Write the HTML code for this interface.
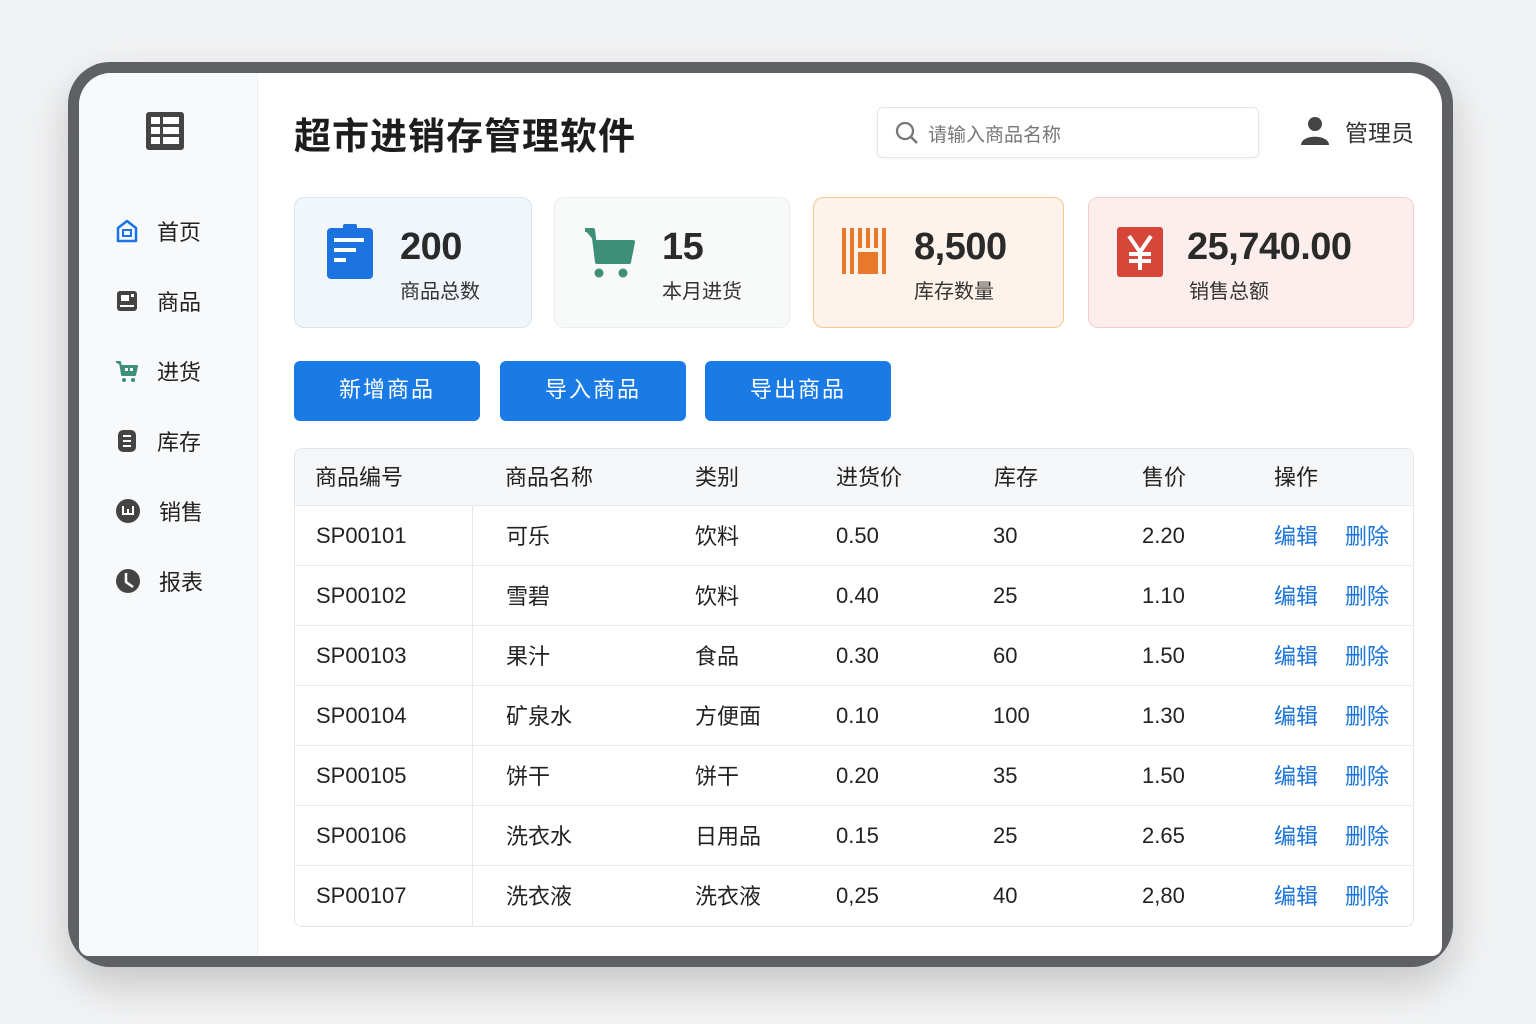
<!DOCTYPE html>
<html><head><meta charset="utf-8"><style>
*{margin:0;padding:0;box-sizing:border-box}
body{width:1536px;height:1024px;background:#f1f2f3;font-family:"Liberation Sans","Noto Sans CJK SC",sans-serif;position:relative;overflow:hidden;color:#222}
.frame{position:absolute;left:68px;top:62px;width:1385px;height:905px;border-radius:42px;background:#5e6063;box-shadow:0 18px 40px rgba(0,0,0,.18)}
.inner{position:absolute;left:79px;top:73px;width:1363px;height:883px;border-radius:32px 32px 10px 10px;background:#fff;overflow:hidden}
.side{position:absolute;left:0;top:0;width:179px;height:100%;background:#f8f9fa;border-right:1px solid #eceef0}
.abs{position:absolute}
.nav{position:absolute;left:36px;font-size:22px;color:#222;display:flex;align-items:center}
.nav svg{margin-right:18px}
.card{position:absolute;top:197px;height:131px;border-radius:10px;border:1px solid}
.num{position:absolute;font-size:38px;font-weight:bold;color:#2a2a2a;letter-spacing:-.5px}
.lab{position:absolute;font-size:20px;color:#333}
.btn{position:absolute;top:361px;height:60px;width:186px;background:#1a7be6;border-radius:6px;color:#fff;font-size:22px;text-align:center;line-height:58px;letter-spacing:2px}
.tbl{position:absolute;left:294px;top:448px;width:1120px;height:479px;border:1px solid #e4e6e8;border-radius:8px;overflow:hidden}
.row{position:absolute;left:0;width:100%;height:60px;border-top:1px solid #e8e9eb;font-size:22px;color:#222}
.row span{position:absolute;top:17px}
.row span.c{top:13px}
.hd{top:0;height:56px;background:#f5f6f7;border-top:none}
.hd span{top:11px}
.blue{color:#1a73d9}
</style></head><body>
<div class="frame"></div>
<div class="inner">
 <div class="side">
  <svg class="abs" style="left:64px;top:36px" width="44" height="44" viewBox="0 0 44 44"><rect x="3" y="3" width="38" height="38" rx="3" fill="#444"/><rect x="8" y="8" width="9" height="7" fill="#fff"/><rect x="20" y="8" width="16" height="7" fill="#fff"/><rect x="8" y="18" width="9" height="7" fill="#fff"/><rect x="20" y="18" width="16" height="7" fill="#fff"/><rect x="8" y="28" width="9" height="7" fill="#fff"/><rect x="20" y="28" width="16" height="7" fill="#fff"/></svg>
  <div class="nav" style="top:142px"><svg width="24" height="26" viewBox="0 0 24 26"><path d="M3 10 L12 3 L21 10 V23 H3 Z" fill="none" stroke="#1a73e8" stroke-width="2.5" stroke-linejoin="round"/><rect x="8" y="12" width="8" height="6" fill="none" stroke="#1a73e8" stroke-width="2"/></svg>首页</div>
  <div class="nav" style="top:212px"><svg width="24" height="24" viewBox="0 0 24 24"><rect x="2" y="2" width="20" height="20" rx="3" fill="#444"/><rect x="6" y="6" width="8" height="6" fill="#fff"/><rect x="16" y="5" width="3" height="3" fill="#fff"/><rect x="5" y="16" width="14" height="2" fill="#fff"/></svg>商品</div>
  <div class="nav" style="top:282px"><svg width="24" height="24" viewBox="0 0 24 24"><path d="M1 3 H5 L7 16 H20 L22 7 H6" fill="#3d8f78" stroke="#3d8f78" stroke-width="2" stroke-linejoin="round"/><rect x="10" y="9" width="3" height="3" fill="#fff"/><rect x="15" y="9" width="3" height="3" fill="#fff"/><circle cx="9" cy="21" r="2" fill="#3d8f78"/><circle cx="18" cy="21" r="2" fill="#3d8f78"/></svg>进货</div>
  <div class="nav" style="top:352px"><svg width="24" height="24" viewBox="0 0 24 24"><rect x="3" y="1" width="18" height="22" rx="5" fill="#444"/><rect x="8" y="6" width="8" height="2" fill="#fff"/><rect x="8" y="11" width="8" height="2" fill="#fff"/><rect x="8" y="16" width="8" height="2" fill="#fff"/></svg>库存</div>
  <div class="nav" style="top:422px"><svg width="26" height="26" viewBox="0 0 26 26"><circle cx="13" cy="13" r="12" fill="#444"/><path d="M8 8 V16 H18 V8 M13 11 V16" fill="none" stroke="#fff" stroke-width="2"/></svg>销售</div>
  <div class="nav" style="top:492px"><svg width="26" height="26" viewBox="0 0 26 26"><circle cx="13" cy="13" r="12" fill="#444"/><path d="M11 5 V14 L18 19" fill="none" stroke="#fff" stroke-width="2.5"/></svg>报表</div>
 </div>
</div>
<div class="abs" style="left:294px;top:106px;font-size:37px;font-weight:bold;color:#1d1d1d;letter-spacing:1px">超市进销存管理软件</div>
<div class="abs" style="left:877px;top:107px;width:382px;height:51px;border:1px solid #e3e5e8;border-radius:6px;box-shadow:0 1px 3px rgba(0,0,0,.05)"></div>
<svg class="abs" style="left:894px;top:120px" width="26" height="26" viewBox="0 0 26 26"><circle cx="11" cy="11" r="8" fill="none" stroke="#777" stroke-width="2.3"/><path d="M17 17 L23 23" stroke="#777" stroke-width="2.5"/></svg>
<div class="abs" style="left:928px;top:120px;font-size:19px;color:#777">请输入商品名称</div>
<svg class="abs" style="left:1298px;top:114px" width="34" height="34" viewBox="0 0 34 34"><circle cx="17" cy="10" r="7" fill="#444"/><path d="M3 31 C3 20 31 20 31 31 Z" fill="#444"/></svg>
<div class="abs" style="left:1345px;top:114px;font-size:23px;color:#333">管理员</div>

<div class="card" style="left:294px;width:238px;background:#f1f6fc;border-color:#d8e4f2"></div>
<svg class="abs" style="left:326px;top:224px" width="48" height="56" viewBox="0 0 48 56"><rect x="1" y="4" width="46" height="51" rx="4" fill="#1b73e0"/><rect x="17" y="0" width="14" height="8" rx="2" fill="#1b73e0"/><rect x="8" y="14" width="30" height="4" fill="#fff"/><rect x="8" y="24" width="22" height="4" fill="#fff"/><rect x="8" y="34" width="12" height="4" fill="#fff"/></svg>
<div class="num" style="left:400px;top:226px">200</div><div class="lab" style="left:400px;top:275px">商品总数</div>

<div class="card" style="left:554px;width:236px;background:#f8f9f9;border-color:#eceeee"></div>
<svg class="abs" style="left:583px;top:226px" width="52" height="52" viewBox="0 0 52 52"><path d="M2 4 H10 L14 36 H46 L50 16 H12" fill="#3d8f78" stroke="#3d8f78" stroke-width="4" stroke-linejoin="round"/><circle cx="16" cy="47" r="4.5" fill="#3d8f78"/><circle cx="40" cy="47" r="4.5" fill="#3d8f78"/></svg>
<div class="num" style="left:662px;top:226px">15</div><div class="lab" style="left:662px;top:275px">本月进货</div>

<div class="card" style="left:813px;width:251px;background:#fdf3ea;border-color:#f3c98c"></div>
<svg class="abs" style="left:842px;top:228px" width="46" height="46" viewBox="0 0 46 46"><g fill="#e8792a"><rect x="0" y="0" width="4" height="46"/><rect x="8" y="0" width="4" height="46"/><rect x="16" y="0" width="4" height="20"/><rect x="24" y="0" width="4" height="20"/><rect x="32" y="0" width="4" height="20"/><rect x="40" y="0" width="4" height="46"/><rect x="16" y="24" width="20" height="22"/></g></svg>
<div class="num" style="left:914px;top:226px">8,500</div><div class="lab" style="left:914px;top:275px">库存数量</div>

<div class="card" style="left:1088px;width:326px;background:#fdeeee;border-color:#f5cdd0"></div>
<svg class="abs" style="left:1117px;top:227px" width="46" height="50" viewBox="0 0 46 50"><rect width="46" height="50" rx="3" fill="#d6473a"/><path d="M12 9 L23 25 L34 9 M23 25 V43 M12 27 H34 M12 34 H34" fill="none" stroke="#fff" stroke-width="4"/></svg>
<div class="num" style="left:1187px;top:226px">25,740.00</div><div class="lab" style="left:1189px;top:275px">销售总额</div>

<div class="btn" style="left:294px">新增商品</div>
<div class="btn" style="left:500px">导入商品</div>
<div class="btn" style="left:705px">导出商品</div>

<div class="tbl">
 <div class="abs" style="left:177px;top:0;width:1px;height:100%;background:#e6e7e9"></div>
 <div class="row hd"><span style="left:20px">商品编号</span><span style="left:210px">商品名称</span><span style="left:400px">类别</span><span style="left:541px">进货价</span><span style="left:699px">库存</span><span style="left:847px">售价</span><span style="left:979px">操作</span></div>
 <div class="row" style="top:56px"><span style="left:21px">SP00101</span><span class="c" style="left:211px">可乐</span><span class="c" style="left:400px">饮料</span><span style="left:541px">0.50</span><span style="left:698px">30</span><span style="left:847px">2.20</span><span class="blue c" style="left:979px">编辑</span><span class="blue c" style="left:1050px">删除</span></div>
 <div class="row" style="top:116px"><span style="left:21px">SP00102</span><span class="c" style="left:211px">雪碧</span><span class="c" style="left:400px">饮料</span><span style="left:541px">0.40</span><span style="left:698px">25</span><span style="left:847px">1.10</span><span class="blue c" style="left:979px">编辑</span><span class="blue c" style="left:1050px">删除</span></div>
 <div class="row" style="top:176px"><span style="left:21px">SP00103</span><span class="c" style="left:211px">果汁</span><span class="c" style="left:400px">食品</span><span style="left:541px">0.30</span><span style="left:698px">60</span><span style="left:847px">1.50</span><span class="blue c" style="left:979px">编辑</span><span class="blue c" style="left:1050px">删除</span></div>
 <div class="row" style="top:236px"><span style="left:21px">SP00104</span><span class="c" style="left:211px">矿泉水</span><span class="c" style="left:400px">方便面</span><span style="left:541px">0.10</span><span style="left:698px">100</span><span style="left:847px">1.30</span><span class="blue c" style="left:979px">编辑</span><span class="blue c" style="left:1050px">删除</span></div>
 <div class="row" style="top:296px"><span style="left:21px">SP00105</span><span class="c" style="left:211px">饼干</span><span class="c" style="left:400px">饼干</span><span style="left:541px">0.20</span><span style="left:698px">35</span><span style="left:847px">1.50</span><span class="blue c" style="left:979px">编辑</span><span class="blue c" style="left:1050px">删除</span></div>
 <div class="row" style="top:356px"><span style="left:21px">SP00106</span><span class="c" style="left:211px">洗衣水</span><span class="c" style="left:400px">日用品</span><span style="left:541px">0.15</span><span style="left:698px">25</span><span style="left:847px">2.65</span><span class="blue c" style="left:979px">编辑</span><span class="blue c" style="left:1050px">删除</span></div>
 <div class="row" style="top:416px"><span style="left:21px">SP00107</span><span class="c" style="left:211px">洗衣液</span><span class="c" style="left:400px">洗衣液</span><span style="left:541px">0,25</span><span style="left:698px">40</span><span style="left:847px">2,80</span><span class="blue c" style="left:979px">编辑</span><span class="blue c" style="left:1050px">删除</span></div>
</div>
</body></html>
